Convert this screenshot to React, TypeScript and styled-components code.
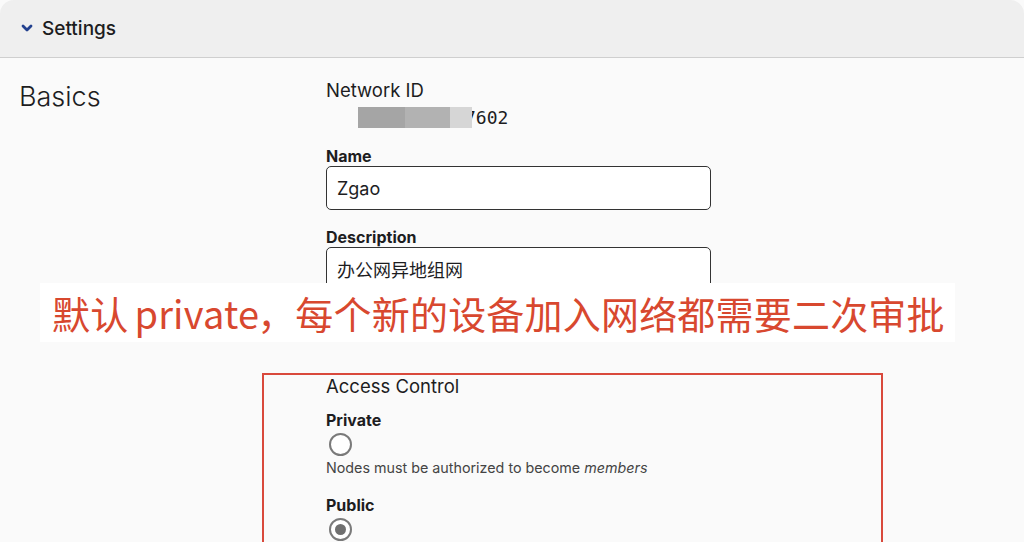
import React from "react";
import styled, { createGlobalStyle } from "styled-components";

const GlobalStyle = createGlobalStyle`
  html, body {
    margin: 0;
    padding: 0;
    background: #ffffff;
  }
  body {
    font-family: Inter, "Liberation Sans", "Noto Sans CJK SC", sans-serif;
    color: #1d1d1f;
    overflow: hidden;
  }
`;

const Page = styled.div`
  position: relative;
  width: 1024px;
  height: 542px;
  overflow: hidden;
  background: #fafafa;
`;

const Header = styled.div`
  height: 57px;
  display: flex;
  align-items: center;
  gap: 9px;
  padding-left: 21px;
  background: #efefef;
  border-bottom: 1px solid #cfcfcf;
  border-radius: 14px 14px 0 0;
  font-size: 19px;
  font-weight: 500;
`;

const Body = styled.div`
  display: grid;
  grid-template-columns: 326px 1fr;
  padding-top: 20px;
`;

const SectionTitle = styled.h2`
  margin: 0;
  padding: 2px 0 0 19px;
  font-size: 27px;
  font-weight: 300;
  line-height: 34px;
`;

const Fields = styled.div`
  display: flex;
  flex-direction: column;
`;

const FieldTitle = styled.div`
  font-size: 18.5px;
  font-weight: 400;
  line-height: 24px;
`;

const IdValue = styled.div`
  display: flex;
  align-items: center;
  margin: 3px 0 0 32px;
  height: 24px;
  font-family: "DejaVu Sans Mono", "Liberation Mono", monospace;
  font-size: 18px;
`;

const Blur = styled.span<{ $w: number; $c: string }>`
  position: relative;
  z-index: 1;
  display: inline-block;
  width: ${(p) => p.$w}px;
  height: 21px;
  background: ${(p) => p.$c};
`;

const Digits = styled.span`
  margin-left: -7px;
`;

const Label = styled.label<{ $top?: number }>`
  display: block;
  margin-top: ${(p) => p.$top ?? 0}px;
  font-size: 16px;
  font-weight: 700;
  line-height: 20px;
`;

const Input = styled.div`
  box-sizing: border-box;
  width: 385px;
  height: 44px;
  display: flex;
  align-items: center;
  padding-left: 10px;
  background: #ffffff;
  border: 1.5px solid #333;
  border-radius: 5px;
  font-size: 18px;
  font-family: Inter, "Noto Sans CJK SC", sans-serif;
`;

const AccessBox = styled.div`
  box-sizing: border-box;
  width: 621px;
  height: 200px;
  margin: 82px 0 0 -64px;
  padding: 0 0 0 62px;
  border: 2px solid #d9493c;
  border-bottom: none;
`;

const GroupTitle = styled.div`
  font-size: 18.5px;
  line-height: 22px;
`;

const Radio = styled.span<{ $checked?: boolean }>`
  box-sizing: border-box;
  display: flex;
  align-items: center;
  justify-content: center;
  width: 23px;
  height: 23px;
  margin: 3px 0 0 3px;
  border: 2px solid #7a7a7a;
  border-radius: 50%;
  background: #fff;
  &::after {
    content: "";
    display: ${(p) => (p.$checked ? "block" : "none")};
    width: 11px;
    height: 11px;
    border-radius: 50%;
    background: #6f6f6f;
  }
`;

const Hint = styled.div`
  margin-top: 3px;
  font-size: 14.3px;
  color: #444;
  line-height: 18px;
  em {
    font-style: italic;
  }
`;

const Banner = styled.div`
  position: absolute;
  left: 40px;
  top: 283px;
  width: 915px;
  height: 59px;
  display: flex;
  align-items: center;
  padding-left: 12px;
  box-sizing: border-box;
  background: #ffffff;
  color: #d8482f;
  font-family: "Noto Sans CJK SC", sans-serif;
  font-size: 38px;
  letter-spacing: 0.2px;
  white-space: nowrap;
`;

const Latin = styled.span`
  margin: 0 -2px 0 6px;
`;

const Chevron = () => (
  <svg width="12" height="9" viewBox="0 0 12 9">
    <polyline
      points="2,2 6,6 10,2"
      fill="none"
      stroke="#23418f"
      strokeWidth="2.8"
      strokeLinecap="round"
      strokeLinejoin="round"
    />
  </svg>
);

export default function App() {
  return (
    <Page>
      <GlobalStyle />
      <Header>
        <Chevron />
        Settings
      </Header>
      <Body>
        <SectionTitle>Basics</SectionTitle>
        <Fields>
          <FieldTitle>Network ID</FieldTitle>
          <IdValue>
            <Blur $w={47} $c="#a5a5a5" />
            <Blur $w={45} $c="#b2b2b2" />
            <Blur $w={22} $c="#d6d6d6" />
            <Digits>7602</Digits>
          </IdValue>
          <Label $top={17}>Name</Label>
          <Input>Zgao</Input>
          <Label $top={17}>Description</Label>
          <Input>办公网异地组网</Input>
          <AccessBox>
            <GroupTitle>Access Control</GroupTitle>
            <Label $top={13}>Private</Label>
            <Radio />
            <Hint>
              Nodes must be authorized to become <em>members</em>
            </Hint>
            <Label $top={18}>Public</Label>
            <Radio $checked />
          </AccessBox>
        </Fields>
      </Body>
      <Banner>
        默认<Latin>private</Latin>，每个新的设备加入网络都需要二次审批
      </Banner>
    </Page>
  );
}
